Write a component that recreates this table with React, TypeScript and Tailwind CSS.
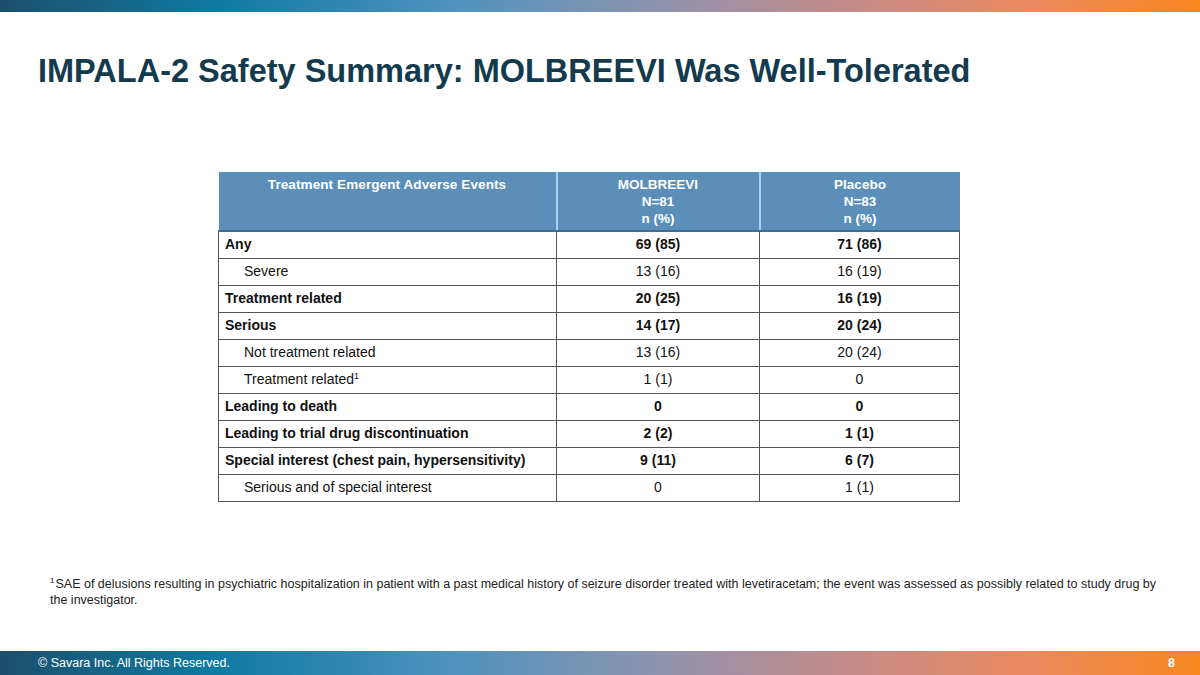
const rows = [
  { label: "Any", a: "69 (85)", b: "71 (86)", bold: true },
  { label: "Severe", a: "13 (16)", b: "16 (19)", indent: true },
  { label: "Treatment related", a: "20 (25)", b: "16 (19)", bold: true },
  { label: "Serious", a: "14 (17)", b: "20 (24)", bold: true },
  { label: "Not treatment related", a: "13 (16)", b: "20 (24)", indent: true },
  { label: "Treatment related", sup: "1", a: "1 (1)", b: "0", indent: true },
  { label: "Leading to death", a: "0", b: "0", bold: true },
  { label: "Leading to trial drug discontinuation", a: "2 (2)", b: "1 (1)", bold: true },
  { label: "Special interest (chest pain, hypersensitivity)", a: "9 (11)", b: "6 (7)", bold: true },
  { label: "Serious and of special interest", a: "0", b: "1 (1)", indent: true },
];

const gradient =
  "bg-[linear-gradient(90deg,#1c4f6c_0%,#0f7aa2_18%,#4f93c0_38%,#8f93ad_55%,#c98a86_72%,#ea8a5e_86%,#f8871f_100%)]";

export default function App() {
  return (
    <div className="flex h-[675px] w-[1200px] flex-col bg-white font-['Liberation_Sans',Arial,sans-serif]">
      <div className={`h-[12px] w-full ${gradient}`} />

      <h1 className="mt-[41px] pl-[38px] text-[32.5px] font-bold leading-[36px] text-[#143a4e]">
        IMPALA-2 Safety Summary: MOLBREEVI Was Well-Tolerated
      </h1>

      <div className="mt-[83px] flex pl-[218px]">
        <table className="w-[741px] table-fixed border-collapse text-[14px] text-[#111]">
          <colgroup>
            <col className="w-[338px]" />
            <col className="w-[203px]" />
            <col className="w-[200px]" />
          </colgroup>
          <thead>
            <tr className="h-[59px] bg-[#5b8fba] align-top text-[13.5px] font-bold leading-[17px] text-white">
              <th className="border-b-2 border-r-2 border-b-[#3f6d90] border-r-[#a9d0f0] pt-[4px] font-bold tracking-[0.1px]">
                Treatment Emergent Adverse Events
              </th>
              <th className="border-b-2 border-r-2 border-b-[#3f6d90] border-r-[#a9d0f0] pt-[4px] font-bold">
                MOLBREEVI
                <br />
                N=81
                <br />
                n (%)
              </th>
              <th className="border-b-2 border-b-[#3f6d90] pt-[4px] font-bold">
                Placebo
                <br />
                N=83
                <br />
                n (%)
              </th>
            </tr>
          </thead>
          <tbody>
            {rows.map((r, i) => (
              <tr key={i} className={`h-[27px] ${r.bold ? "font-bold" : ""}`}>
                <td
                  className={`border border-[#555] ${r.indent ? "pl-[25px]" : "pl-[6px]"}`}
                >
                  {r.label}
                  {r.sup && (
                    <span className="relative top-[-5px] text-[9px] font-normal">{r.sup}</span>
                  )}
                </td>
                <td className="border border-[#555] text-center">{r.a}</td>
                <td className="border border-[#555] text-center">{r.b}</td>
              </tr>
            ))}
          </tbody>
        </table>
      </div>

      <p className="mt-[74px] pl-[50px] pr-[40px] text-[12.5px] leading-[16px] text-[#222]">
        <span className="mr-[1px] inline-block align-top text-[8px] leading-[10px]">1</span>SAE of
        delusions resulting in psychiatric hospitalization in patient with a past medical history of
        seizure disorder treated with levetiracetam; the event was assessed as possibly related to
        study drug by the investigator.
      </p>

      <div
        className={`mt-auto flex h-[24px] w-full items-center justify-between pl-[38px] pr-[25px] text-[12.5px] text-white ${gradient}`}
      >
        <span>© Savara Inc. All Rights Reserved.</span>
        <span className="font-bold">8</span>
      </div>
    </div>
  );
}
